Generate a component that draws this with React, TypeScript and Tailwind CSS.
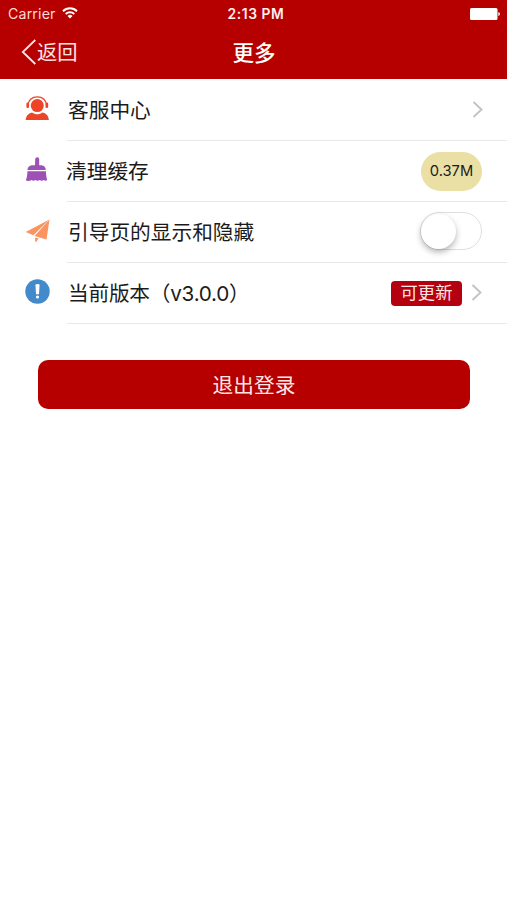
import { useState, type ReactNode } from 'react';

function ServiceIcon() {
  return (
    <svg width="24" height="24" viewBox="0 0 24 24" className="mb-px block" fill="#ed4427">
      <circle cx="12.300" cy="9.600" r="6.500" />
      <path d="M3 9C3.800 3.600 7.500.9 12.300.9S20.800 3.600 21.600 9" fill="none" stroke="#ed4427" strokeWidth="1.300" />
      <rect x="1.400" y="6.600" width="2.700" height="5.400" rx="1.300" />
      <rect x="20.500" y="6.600" width="2.700" height="5.400" rx="1.300" />
      <path d="M.7 24c.3-3.800 2.200-6.500 6.300-7.600 3.300 2.400 7.300 2.400 10.600 0 4.100 1.100 6 3.800 6.300 7.600z" />
    </svg>
  );
}

function BroomIcon() {
  return (
    <svg width="24" height="24" viewBox="0 0 24 24" className="mb-px block" fill="#9d50b5">
      <path d="M10.200 2.300a2 2 0 0 1 4 0V8.300h2.300c2.800.3 4 1.900 4.300 4.700H2.400c.4-2.800 1.700-4.400 4.500-4.700h3.100z" />
      <path d="M2.400 14.300h18.500c.1 3.400.5 6.300 1.300 8.800-1.100.8-2.300.7-3.300-.1-1.300 1-2.900 1-4.200.1-1.300.9-3 .9-4.300 0-1.300.9-2.800.8-3.900-.1-1.700 1.100-4.200 1.200-5.700.2 1.200-2.600 1.600-5.400 1.600-8.900z" />
    </svg>
  );
}

function PlaneIcon() {
  return (
    <svg width="25" height="24" viewBox="0 0 25 24" className="mt-px block" fill="#fa9461">
      <path d="M24.500.5.700 13.100l7.700 3.200z" />
      <path d="M24.500.5 9.500 17l12 3.400z" />
      <path d="m10.100 18.400 3.400.9-2.300 3.900-1.100-1.500z" />
    </svg>
  );
}

function InfoIcon() {
  return (
    <svg width="25" height="25" viewBox="0 0 25 25" className="block">
      <circle cx="12.500" cy="12.500" r="12.200" fill="#438aca" />
      <path d="M10.400 5.600q2.100-1 4.200 0l-.6 9.600h-3z" fill="#fff" />
      <circle cx="12.500" cy="18" r="1.600" fill="#fff" />
    </svg>
  );
}

function ChevronRight() {
  return (
    <svg width="11" height="17" viewBox="0 0 11 17" className="mb-[2px] block" fill="none" stroke="#c3c3c7" strokeWidth="1.900">
      <path d="m1.500 1 8 7.500-8 7.500" />
    </svg>
  );
}

function StatusBar() {
  return (
    <div className="grid h-7 grid-cols-3 items-center pl-2 pr-[7px] text-white">
      <div className="flex items-center gap-[6px]">
        <span className="text-[14.200px] tracking-[0.150px] text-[#ffdada]">Carrier</span>
        <svg width="16" height="12" viewBox="0 0 16 12" className="mb-[2px] block" fill="none" stroke="#fff" strokeWidth="2">
          <path d="M1 4.200a10 10 0 0 1 14 0M3.700 7a6.200 6.200 0 0 1 8.600 0" />
          <path d="M8 11.500 5.500 9a3.600 3.600 0 0 1 5 0z" fill="#fff" stroke="none" />
        </svg>
      </div>
      <span className="pl-1 text-center text-[13.800px] font-semibold tracking-[0.600px] whitespace-nowrap text-[#fff0f0]">
        2:13 PM
      </span>
      <svg width="30" height="12" viewBox="0 0 30 12" className="mb-px block justify-self-end" fill="#fff">
        <rect width="27.500" height="12" rx="1.500" />
        <path d="M28.300 4q1.700.3 1.700 2t-1.700 2z" />
      </svg>
    </div>
  );
}

function NavBar() {
  return (
    <div className="grid h-[51px] grid-cols-3 items-center pl-[21px] pr-5">
      <button className="flex items-center text-[20.300px] leading-none text-[#ffe3e3]">
        <svg width="16" height="26" viewBox="0 0 16 26" className="mb-[3px] block" fill="none" stroke="currentColor" strokeWidth="1.800">
          <path d="M14.300 1 1.800 13l12.500 12" />
        </svg>
        返回
      </button>
      <h1 className="text-center text-[21.500px] leading-none font-medium text-white">更多</h1>
    </div>
  );
}

interface RowProps {
  icon: ReactNode;
  label: ReactNode;
  labelClass?: string;
  children: ReactNode;
}

function Row({ icon, label, labelClass = 'pl-[43px]', children }: RowProps) {
  return (
    <li className="h-[61px] pl-[25px]">
      <div className="flex h-[60px] items-center pr-[25px]">
        <div className="w-0 shrink-0 pb-[3px]">
          <div className="w-[25px]">{icon}</div>
        </div>
        <span className={`flex-1 pt-[2px] text-[20.700px] leading-none whitespace-nowrap ${labelClass}`}>{label}</span>
        {children}
      </div>
      <div className="ml-[42px] h-px bg-[#e8e8ea]" />
    </li>
  );
}

export default function App() {
  const [showGuide, setShowGuide] = useState(false);

  return (
    <div className="min-h-screen bg-white font-['Inter','Noto_Sans_CJK_SC',sans-serif] text-[#1b1b1b]">
      <header className="bg-[#b60000]">
        <StatusBar />
        <NavBar />
      </header>

      <ul className="pt-px">
        <Row icon={<ServiceIcon />} label="客服中心">
          <div className="-mr-px">
            <ChevronRight />
          </div>
        </Row>
        <Row icon={<BroomIcon />} label="清理缓存" labelClass="pl-[41px]">
          <span className="flex h-[39px] w-[61px] items-center justify-center rounded-full bg-[#eae0a5] text-[14.700px]">
            0.37M
          </span>
        </Row>
        <Row icon={<PlaneIcon />} label="引导页的显示和隐藏">
          <button
            role="switch"
            aria-checked={showGuide}
            onClick={() => setShowGuide(!showGuide)}
            className={`mb-[2px] flex h-[38px] w-[62px] items-center rounded-full border-[1.500px] border-[#dfdfdf] ${
              showGuide ? 'justify-end bg-[#4cd964]' : 'bg-white'
            }`}
          >
            <span className="size-[35px] rounded-full bg-white shadow-[0_3px_6px_rgba(0,0,0,0.3)]" />
          </button>
        </Row>
        <Row
          icon={<InfoIcon />}
          label={
            <span className="tracking-[-0.250px]">当前版本（v3.0.0）</span>
          }
        >
          <span className="mr-[9px] flex h-[25px] w-[71px] items-center justify-center rounded-[4px] bg-[#b5000f] text-[17.300px] leading-none text-[#ffe6e6]">
            可更新
          </span>
          <ChevronRight />
        </Row>
      </ul>

      <div className="pt-9 pr-[37px] pl-[38px]">
        <button className="h-[49px] w-full rounded-[10px] bg-[#b60000] pt-[2px] text-[20.700px] text-[#ffe6e6]">
          退出登录
        </button>
      </div>
    </div>
  );
}
